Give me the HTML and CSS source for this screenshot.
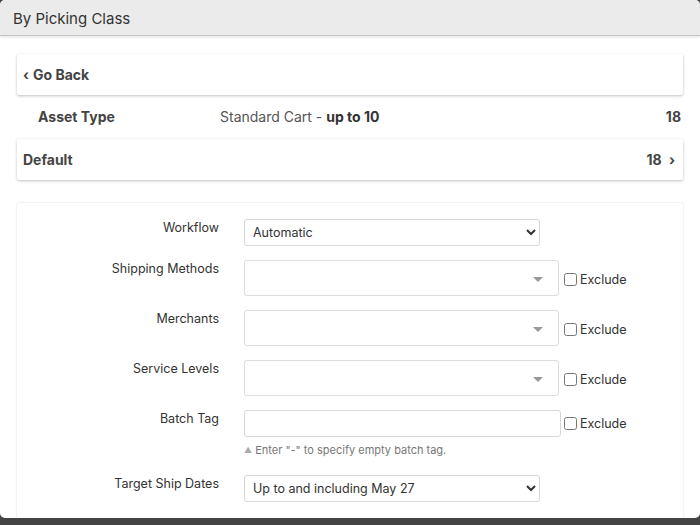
FILE: index.html
```html
<!DOCTYPE html>
<html lang="en">
<head>
    <meta charset="UTF-8">
    <meta name="viewport" content="width=device-width, initial-scale=1.0">
    <title>By Picking Class</title>
    <link rel="stylesheet" href="styles.css">
</head>
<body>
    <div class="modal">
        <div class="modal-header">By Picking Class</div>
        <div class="modal-body">
            <div class="card card-link">
                <span class="chev">&lsaquo;</span> Go Back
            </div>
            <div class="asset-row">
                <span class="asset-label">Asset Type</span>
                <span class="asset-value">Standard Cart - <b>up to 10</b></span>
                <span class="asset-count">18</span>
            </div>
            <div class="card card-link card-split">
                <span>Default</span>
                <span>18 <span class="chev">&rsaquo;</span></span>
            </div>

            <form class="card form-card">
                <div class="form-row">
                    <label class="form-label">Workflow</label>
                    <select class="select">
                        <option>Automatic</option>
                    </select>
                </div>
                <div class="form-row">
                    <label class="form-label">Shipping Methods</label>
                    <div class="multi"><span class="caret"></span></div>
                    <label class="exclude"><input type="checkbox"> Exclude</label>
                </div>
                <div class="form-row">
                    <label class="form-label">Merchants</label>
                    <div class="multi"><span class="caret"></span></div>
                    <label class="exclude"><input type="checkbox"> Exclude</label>
                </div>
                <div class="form-row">
                    <label class="form-label">Service Levels</label>
                    <div class="multi"><span class="caret"></span></div>
                    <label class="exclude"><input type="checkbox"> Exclude</label>
                </div>
                <div class="form-row row-tag">
                    <label class="form-label">Batch Tag</label>
                    <div class="field">
                        <input type="text" class="text-input">
                        <div class="help"><span class="help-icon">&#9650;</span> Enter "-" to specify empty batch tag.</div>
                    </div>
                    <label class="exclude exclude-tag"><input type="checkbox"> Exclude</label>
                </div>
                <div class="form-row">
                    <label class="form-label">Target Ship Dates</label>
                    <select class="select">
                        <option>Up to and including May 27</option>
                    </select>
                </div>
            </form>
        </div>
    </div>
</body>
</html>
```

FILE: styles.css
```css
html, body {
    margin: 0;
    height: 100%;
}
body {
    background-color: #444;
    font-family: Inter, "Noto Sans", sans-serif;
    color: #333;
}
.modal {
    height: 518px;
    background-color: #fff;
    border-radius: 5px;
    overflow: hidden;
}
.modal-header {
    height: 36px;
    box-sizing: border-box;
    padding: 9px 13px 0;
    background-color: #ebebeb;
    border-bottom: 1px solid #c4c4c4;
    box-shadow: 0 1px 3px rgba(0, 0, 0, 0.12);
    font-size: 15px;
    color: #333;
}
.modal-body {
    padding: 18px 17px 0;
}
.card {
    background-color: #fff;
    box-shadow: 0 1px 3px rgba(0, 0, 0, 0.25);
    border-radius: 2px;
}
.card-link {
    height: 41px;
    box-sizing: border-box;
    padding: 0 6px;
    display: flex;
    align-items: center;
    font-size: 14px;
    font-weight: 700;
    color: #444;
}
.card-split {
    justify-content: space-between;
    padding-right: 8px;
}
.chev {
    font-weight: 700;
    margin-right: 4px;
}
.card-split .chev {
    margin: 0 0 0 4px;
}
.asset-row {
    display: flex;
    align-items: center;
    height: 44px;
    padding: 0 2px 1px 21px;
    box-sizing: border-box;
    font-size: 14px;
    color: #444;
}
.asset-label {
    width: 182px;
    font-weight: 700;
}
.asset-value {
    flex: 1;
    color: #555;
}
.asset-value b {
    color: #333;
}
.asset-count {
    font-weight: 700;
}
.form-card {
    margin-top: 23px;
    padding: 16px 0 20px;
    height: 400px;
    box-sizing: border-box;
    box-shadow: 0 0 2px rgba(0, 0, 0, 0.18);
}
.form-row {
    display: flex;
    align-items: flex-start;
    margin-bottom: 14px;
}
.form-label {
    width: 202px;
    text-align: right;
    padding-top: 1px;
    margin-right: 25px;
    font-size: 12.5px;
    color: #333;
}
.select {
    width: 296px;
    height: 27px;
    border: 1px solid #d6d6d6;
    border-radius: 3px;
    background-color: #fff;
    font-family: Inter, "Noto Sans", sans-serif;
    font-size: 12.5px;
    color: #333;
    padding: 0 4px;
}
.multi {
    width: 315px;
    height: 36px;
    box-sizing: border-box;
    border: 1px solid #ddd;
    border-radius: 3px;
    position: relative;
}
.caret {
    position: absolute;
    right: 15px;
    top: 16px;
    border-left: 5px solid transparent;
    border-right: 5px solid transparent;
    border-top: 5px solid #999;
}
.exclude {
    display: flex;
    align-items: center;
    margin-top: 12px;
    margin-left: 4px;
    font-size: 12.5px;
    color: #333;
}
.exclude input {
    width: 13px;
    height: 13px;
    margin: 0 3px 0 1px;
}
.exclude-tag {
    margin-top: 6px;
    margin-left: 2px;
}
.row-tag {
    margin-bottom: 18px;
}
.field {
    width: 317px;
}
.text-input {
    width: 317px;
    height: 27px;
    box-sizing: border-box;
    border: 1px solid #d6d6d6;
    border-radius: 3px;
    margin: 0;
}
.help {
    margin-top: 6px;
    font-size: 11px;
    color: #777;
}
.help-icon {
    font-size: 8px;
    color: #aaa;
    vertical-align: 1px;
}
```
